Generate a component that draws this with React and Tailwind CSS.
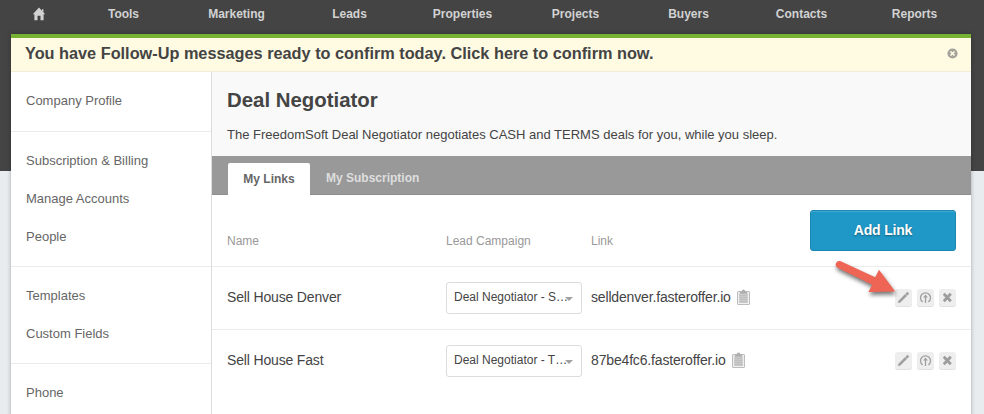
import React from 'react';
import clsx from 'clsx';

const NAV = ['Tools', 'Marketing', 'Leads', 'Properties', 'Projects', 'Buyers', 'Contacts', 'Reports'];

const SIDEBAR = [
  ['Company Profile'],
  ['Subscription & Billing', 'Manage Accounts', 'People'],
  ['Templates', 'Custom Fields'],
  ['Phone'],
];

const LINKS = [
  { name: 'Sell House Denver', campaign: 'Deal Negotiator - S…', url: 'selldenver.fasteroffer.io', marked: true },
  { name: 'Sell House Fast', campaign: 'Deal Negotiator - T…', url: '87be4fc6.fasteroffer.io' },
];

function HomeIcon() {
  return (
    <svg width="14" height="14" viewBox="0 0 14 14" fill="#d2d2d2">
      <path d="M7 .6 13.2 7.2H11.6V13.2H8.5V8.8H5.5v4.4H2.4V7.2H.8z" />
      <path d="M10 2.2h1.4v3.2L10 4z" />
    </svg>
  );
}

function CloseIcon() {
  return (
    <svg width="11" height="11" viewBox="0 0 11 11">
      <circle cx="5.5" cy="5.5" r="5.1" fill="#a3a29b" />
      <path d="M3.5 3.5l4 4M7.5 3.5l-4 4" stroke="#fffbe2" strokeWidth="1.7" />
    </svg>
  );
}

function ClipboardIcon() {
  return (
    <svg className="mb-0.5" width="13" height="16" viewBox="0 0 13 16">
      <rect x="0.5" y="2.5" width="12" height="13" rx="0.5" fill="#efefef" stroke="#bdbdbd" />
      <rect x="2.3" y="4" width="8.4" height="10" fill="#c9c9c9" />
      <path d="M2.3 6.5h8.4M2.3 8.5h8.4M2.3 10.5h8.4M2.3 12.5h8.4" stroke="#bdbdbd" strokeWidth="0.8" />
      <path d="M3 4.4V2.4h2.1V1Q6.5-.2 7.9 1v1.4H10v2z" fill="#aeaeae" />
    </svg>
  );
}

function PencilIcon() {
  return (
    <svg width="17" height="17" viewBox="0 0 17 17">
      <path d="M4.2 12.8 11 6" stroke="#a0a0a0" strokeWidth="2.6" />
      <path d="M2.8 14.1 3.4 11.8 5.2 13.6z" fill="#a0a0a0" />
      <path d="M12 5 12.5 4.5" stroke="#a0a0a0" strokeWidth="2.7" strokeLinecap="round" />
    </svg>
  );
}

function UploadIcon() {
  return (
    <svg width="17" height="17" viewBox="0 0 17 17" fill="none" stroke="#a0a0a0">
      <path d="M5.6 12.9A5 5 0 1 1 11.4 12.9" strokeWidth="1.3" />
      <path d="M8.5 14V6.6" strokeWidth="1.3" />
      <path d="M6.1 8.6 8.5 5.6 10.9 8.6z" fill="#a0a0a0" stroke="none" />
    </svg>
  );
}

function DeleteIcon() {
  return (
    <svg width="17" height="17" viewBox="0 0 17 17">
      <path d="M4.8 4.8l7 7.4M11.8 4.8l-7 7.4" stroke="#9c9c9c" strokeWidth="2.8" />
    </svg>
  );
}

function Pointer() {
  return (
    <svg className="absolute left-[-61px] top-[-29px] drop-shadow-[1px_3px_2px_rgba(0,0,0,0.55)]" width="66" height="40" viewBox="0 0 66 40">
      <path d="M6.2 1.1 41.2 17.2 45 9.8 61.2 31.4 34.4 32.1 38.2 24.7 3.5 7.7A3.6 3.6 0 0 1 6.2 1.1z" fill="#ef6555" />
    </svg>
  );
}

function ActionButton({ children }) {
  return (
    <button className="flex size-[17px] items-center justify-center rounded-[3px] bg-[#eeeeee] shadow-[0_1px_0_#e0e0e0]">
      {children}
    </button>
  );
}

function LinkRow({ link, last }) {
  return (
    <div
      className={clsx(
        'grid h-[63px] grid-cols-[219px_145px_1fr_61px] items-center border-b px-[15px] text-sm tracking-[-0.16px] text-[#444]',
        last ? 'border-transparent' : 'border-[#ebebeb]'
      )}
    >
      <span className="pb-0.5">{link.name}</span>
      <button className="flex h-8 w-[136px] items-center rounded-[3px] border border-[#dcdcdc] pl-[7px] text-[12px] tracking-normal">
        <span className="w-[111px] whitespace-nowrap">{link.campaign}</span>
        <span className="mt-px border-x-4 border-t-4 border-x-transparent border-t-[#a0a0a0]" />
      </button>
      <span className="flex items-center gap-1.5">
        <span className="pb-0.5">{link.url}</span>
        <ClipboardIcon />
      </span>
      <span className="relative flex gap-[5px] pb-0.5">
        <ActionButton><PencilIcon /></ActionButton>
        <ActionButton><UploadIcon /></ActionButton>
        <ActionButton><DeleteIcon /></ActionButton>
        {link.marked && <Pointer />}
      </span>
    </div>
  );
}

export default function App() {
  return (
    <div className="h-[414px] overflow-hidden bg-[linear-gradient(#444_171px,#e8ecee_171px)] pl-[11px] font-['Liberation_Sans',Arial,sans-serif]">
      <nav className="flex h-[34px] w-[960px] pb-[6px] text-[12px] font-bold text-[#d2d2d2]">
        <a className="flex w-14 items-center justify-center"><HomeIcon /></a>
        {NAV.map((item) => (
          <a key={item} className="flex w-[113px] items-center justify-center">{item}</a>
        ))}
      </nav>

      <div className="flex h-[390px] w-[960px] flex-col border-t-4 border-[#78b233] bg-white shadow-[0_0_4px_rgba(0,0,0,0.3)]">
        <div className="flex h-[34px] shrink-0 items-center justify-between border-b border-[#f1edda] bg-[#fffbe2] pl-3.5 pr-[13px] pb-[3px]">
          <span className="text-[16.3px] font-bold text-[#444]">You have Follow-Up messages ready to confirm today. Click here to confirm now.</span>
          <CloseIcon />
        </div>

        <div className="flex flex-1">
          <aside className="w-[201px] shrink-0 border-r border-[#dcdcdc] text-[13px] text-[#666]">
            {SIDEBAR.map((group) => (
              <div key={group[0]} className="border-b border-[#ebebeb] py-[10px] first:pb-[11px]">
                {group.map((item) => (
                  <a key={item} className="flex h-[38px] items-center pl-[15px]">{item}</a>
                ))}
              </div>
            ))}
          </aside>

          <main className="flex-1">
            <header className="h-[84px] bg-[#f9f9f9] pl-[15px] pt-4">
              <h1 className="text-[20.4px] leading-6 font-bold text-[#444]">Deal Negotiator</h1>
              <p className="mt-[13px] text-[13px] leading-5 text-[#444]">The FreedomSoft Deal Negotiator negotiates CASH and TERMS deals for you, while you sleep.</p>
            </header>

            <div className="flex h-[39px] items-end border-b border-[#8e8e8e] bg-[#999] pl-4 text-[12px] font-bold">
              <a className="-mb-px flex h-8 w-[82px] items-center justify-center rounded-t-[2px] bg-white text-[#666]">My Links</a>
              <a className="flex h-8 items-center pl-4 text-[#dedede]">My Subscription</a>
            </div>

            <div className="grid h-[72px] grid-cols-[219px_145px_1fr_146px] items-center border-b border-[#ebebeb] px-[15px] text-[12px] text-[#999]">
              <span className="pt-5">Name</span>
              <span className="pt-5">Lead Campaign</span>
              <span className="pt-5">Link</span>
              <button className="h-[41px] rounded-[3px] border border-[#1a87b2] bg-[#1f98c7] pb-0.5 text-sm font-bold tracking-[-0.2px] text-white shadow-[inset_0_1px_0_#42a9d1] [text-shadow:0_1px_2px_rgba(0,0,0,0.4)]">Add Link</button>
            </div>

            {LINKS.map((link, i) => (
              <LinkRow key={link.url} link={link} last={i === LINKS.length - 1} />
            ))}
          </main>
        </div>
      </div>
    </div>
  );
}
